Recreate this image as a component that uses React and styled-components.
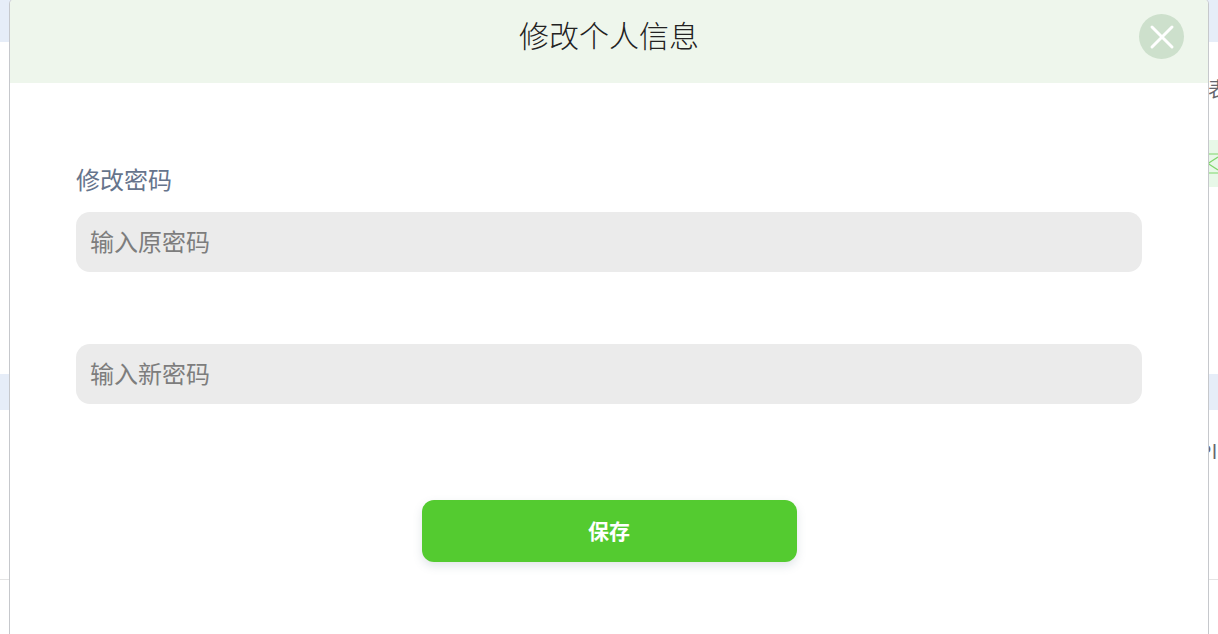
import React from "react";
import styled, { createGlobalStyle } from "styled-components";

const Global = createGlobalStyle`
  html, body { margin: 0; padding: 0; height: 100%; overflow: hidden; background: #fff; }
  #root { height: 100%; }
  * { box-sizing: border-box; }
`;

const FONT = `"Liberation Sans", "Noto Sans CJK SC", sans-serif`;

const Page = styled.div`
  position: relative;
  width: 1218px;
  height: 634px;
  overflow: hidden;
  font-family: ${FONT};
  background: #fff;
  display: flex;
  flex-direction: column;
`;

const BackBand = styled.div`
  flex: none;
  height: ${(p) => p.$h}px;
  margin-top: ${(p) => p.$top}px;
  background: #e6edf8;
`;

const BackRule = styled.div`
  flex: none;
  height: 1px;
  margin-top: ${(p) => p.$top}px;
  background: #e4e4e4;
`;

const BackText = styled.div`
  flex: none;
  align-self: flex-end;
  width: ${(p) => p.$w}px;
  height: 24px;
  margin-top: ${(p) => p.$top}px;
  overflow: hidden;
  white-space: nowrap;
  font-size: 20px;
  line-height: 24px;
  letter-spacing: 1px;
  color: #66666e;
`;

const BackTag = styled.div`
  flex: none;
  align-self: flex-end;
  width: 10px;
  height: 47px;
  margin-top: 38px;
  background: #e8f8e8;
  display: flex;
  align-items: flex-start;
  padding-top: 13px;
`;

const Modal = styled.section`
  position: absolute;
  left: 9px;
  top: -2px;
  width: 1200px;
  height: 660px;
  background: #fff;
  border: 1px solid #c6c8cc;
  border-radius: 6px;
  overflow: hidden;
`;

const Header = styled.header`
  position: relative;
  height: 84px;
  padding-bottom: 8px;
  background: #eef6ec;
  display: flex;
  align-items: center;
  justify-content: center;
`;

const Title = styled.h1`
  margin: 0;
  font-size: 30px;
  font-weight: 300;
  line-height: 40px;
  color: #222;
`;

const Close = styled.button`
  position: absolute;
  right: 24px;
  top: 15px;
  width: 45px;
  height: 45px;
  padding: 0;
  border: 0;
  border-radius: 50%;
  background: #cde0cc;
  display: flex;
  align-items: center;
  justify-content: center;
`;

const Body = styled.div`
  padding: 82px 66px 0;
  display: flex;
  flex-direction: column;
`;

const Label = styled.label`
  font-size: 24px;
  line-height: 32px;
  color: #66748c;
  margin-bottom: 15px;
`;

const Field = styled.input`
  flex: none;
  height: 60px;
  margin-bottom: ${(p) => p.$gap}px;
  padding: 2px 0 0 14px;
  border: 0;
  outline: 0;
  border-radius: 14px;
  background: #ebebeb;
  font-family: ${FONT};
  font-size: 24px;
  color: #7d7d7d;

  &::placeholder {
    color: #7d7d7d;
    opacity: 1;
  }
`;

const Save = styled.button`
  align-self: center;
  width: 375px;
  height: 62px;
  padding: 0 0 2px;
  border: 0;
  border-radius: 12px;
  background: #54cb30;
  color: #fff;
  font-family: ${FONT};
  font-size: 21px;
  font-weight: 700;
  box-shadow: 0 4px 10px rgba(90, 110, 130, 0.18);
`;

export default function App() {
  return (
    <Page>
      <Global />
      <BackBand $top={0} $h={42} />
      <BackText $top={36} $w={10}>表</BackText>
      <BackTag>
        <svg width="10" height="21" viewBox="0 0 10 21" fill="none" stroke="#7fd56b" strokeWidth="1.2">
          <path d="M0 1 H10 M0 20 H10 M0 10.5 L10 4 M0 10.5 L10 17" />
        </svg>
      </BackTag>
      <BackBand $top={187} $h={36} />
      <BackText $top={30} $w={20}>Pl</BackText>
      <BackRule $top={115} />
      <Modal>
        <Header>
          <Title>修改个人信息</Title>
          <Close aria-label="关闭">
            <svg width="26" height="26" viewBox="0 0 26 26" fill="none" stroke="#fff" strokeWidth="3" strokeLinecap="round">
              <path d="M3 3 L23 23 M23 3 L3 23" />
            </svg>
          </Close>
        </Header>
        <Body>
          <Label>修改密码</Label>
          <Field $gap={72} placeholder="输入原密码" />
          <Field $gap={96} placeholder="输入新密码" />
          <Save>保存</Save>
        </Body>
      </Modal>
    </Page>
  );
}
